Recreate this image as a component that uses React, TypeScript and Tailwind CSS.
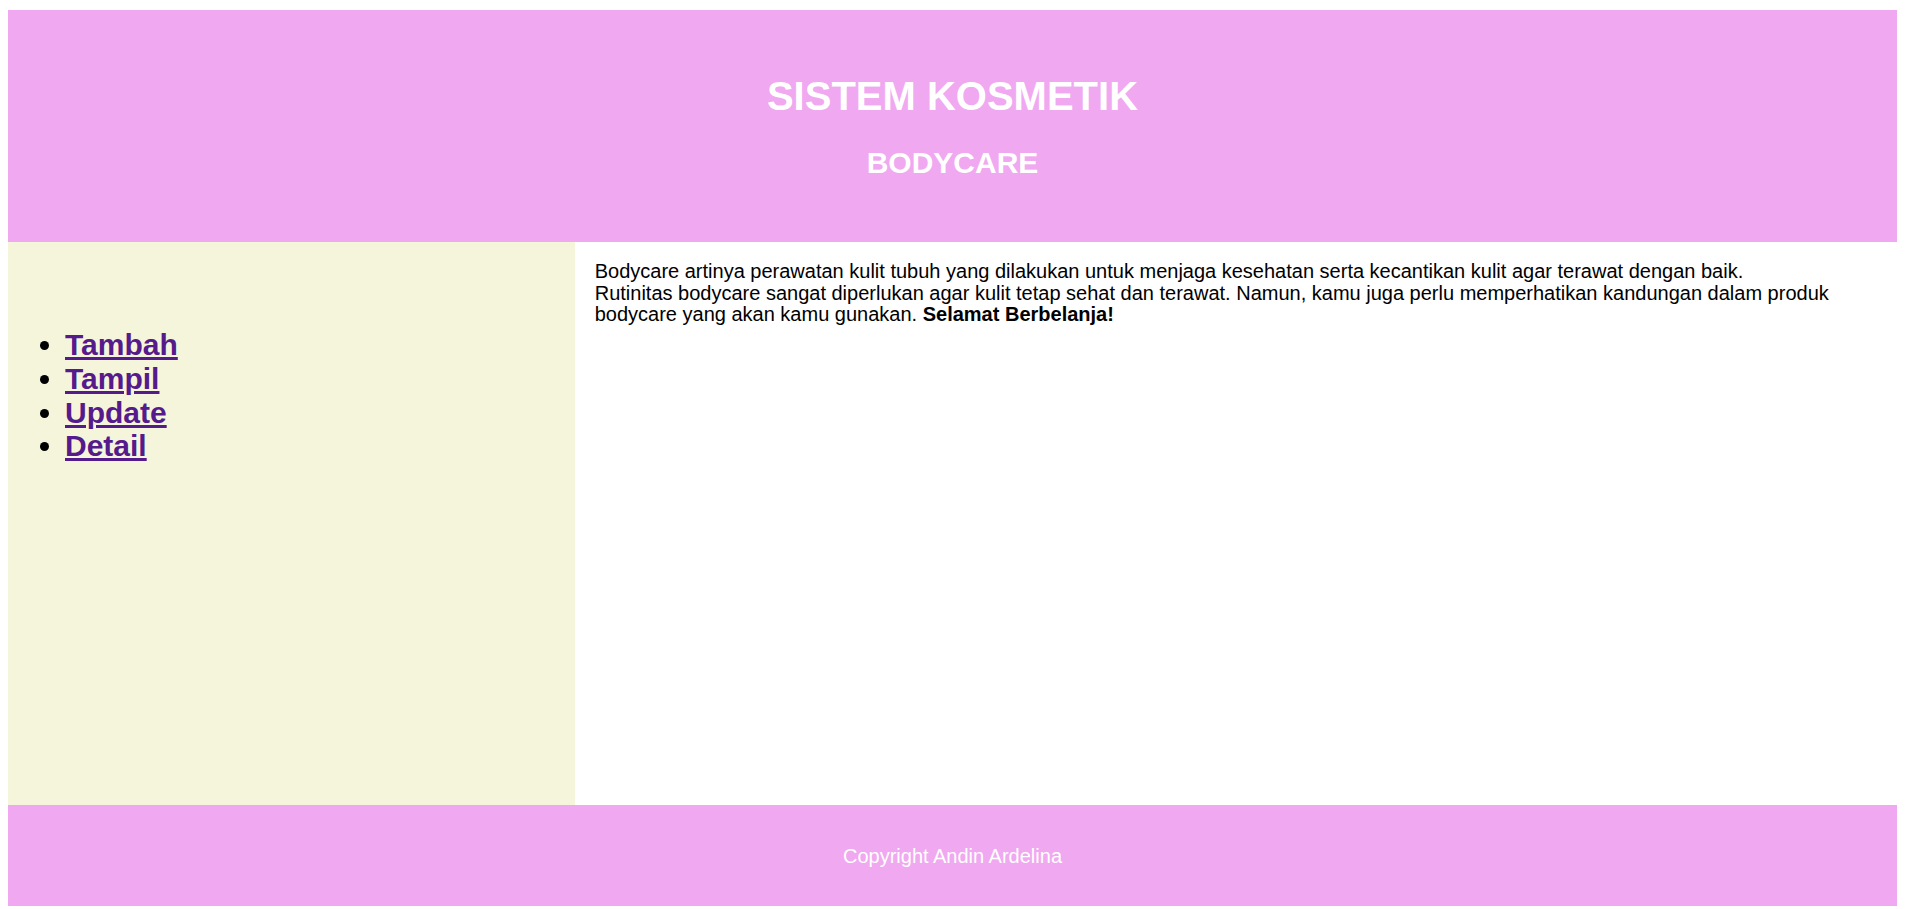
export default function App() {
  const menu = ["Tambah", "Tampil", "Update", "Detail"];

  return (
    <div className="mx-2 mt-[10px] font-['Liberation_Sans',Arial,sans-serif] text-black">
      <header className="bg-[#f0a8f0] text-white text-center pt-[63px] pb-[63px] flex flex-col gap-[27px]">
        <h1 className="text-[40px] font-bold leading-[46px]">SISTEM KOSMETIK</h1>
        <h2 className="text-[30px] font-bold leading-[33px]">BODYCARE</h2>
      </header>

      <div className="flex h-[563px]">
        <aside className="w-[30%] bg-[#f5f5dc] pl-[17px] pt-[86px]">
          <ul className="list-disc pl-10">
            {menu.map((item) => (
              <li key={item} className="text-[30px] font-bold leading-[33.8px]">
                <a href="#" className="text-[#551a8b] underline">
                  {item}
                </a>
              </li>
            ))}
          </ul>
        </aside>
        <main className="flex-1 bg-white px-5 pt-[19px] pb-5 text-[20px] leading-[21.6px]">
          <p>
            Bodycare artinya perawatan kulit tubuh yang dilakukan untuk menjaga kesehatan serta kecantikan kulit agar terawat dengan baik.
            <br />
            Rutinitas bodycare sangat diperlukan agar kulit tetap sehat dan terawat. Namun, kamu juga perlu memperhatikan kandungan dalam produk bodycare yang akan kamu gunakan. <b>Selamat Berbelanja!</b>
          </p>
        </main>
      </div>

      <footer className="bg-[#f0a8f0] h-[101px] flex items-center justify-center text-white text-[20px]">
        Copyright Andin Ardelina
      </footer>
    </div>
  );
}
